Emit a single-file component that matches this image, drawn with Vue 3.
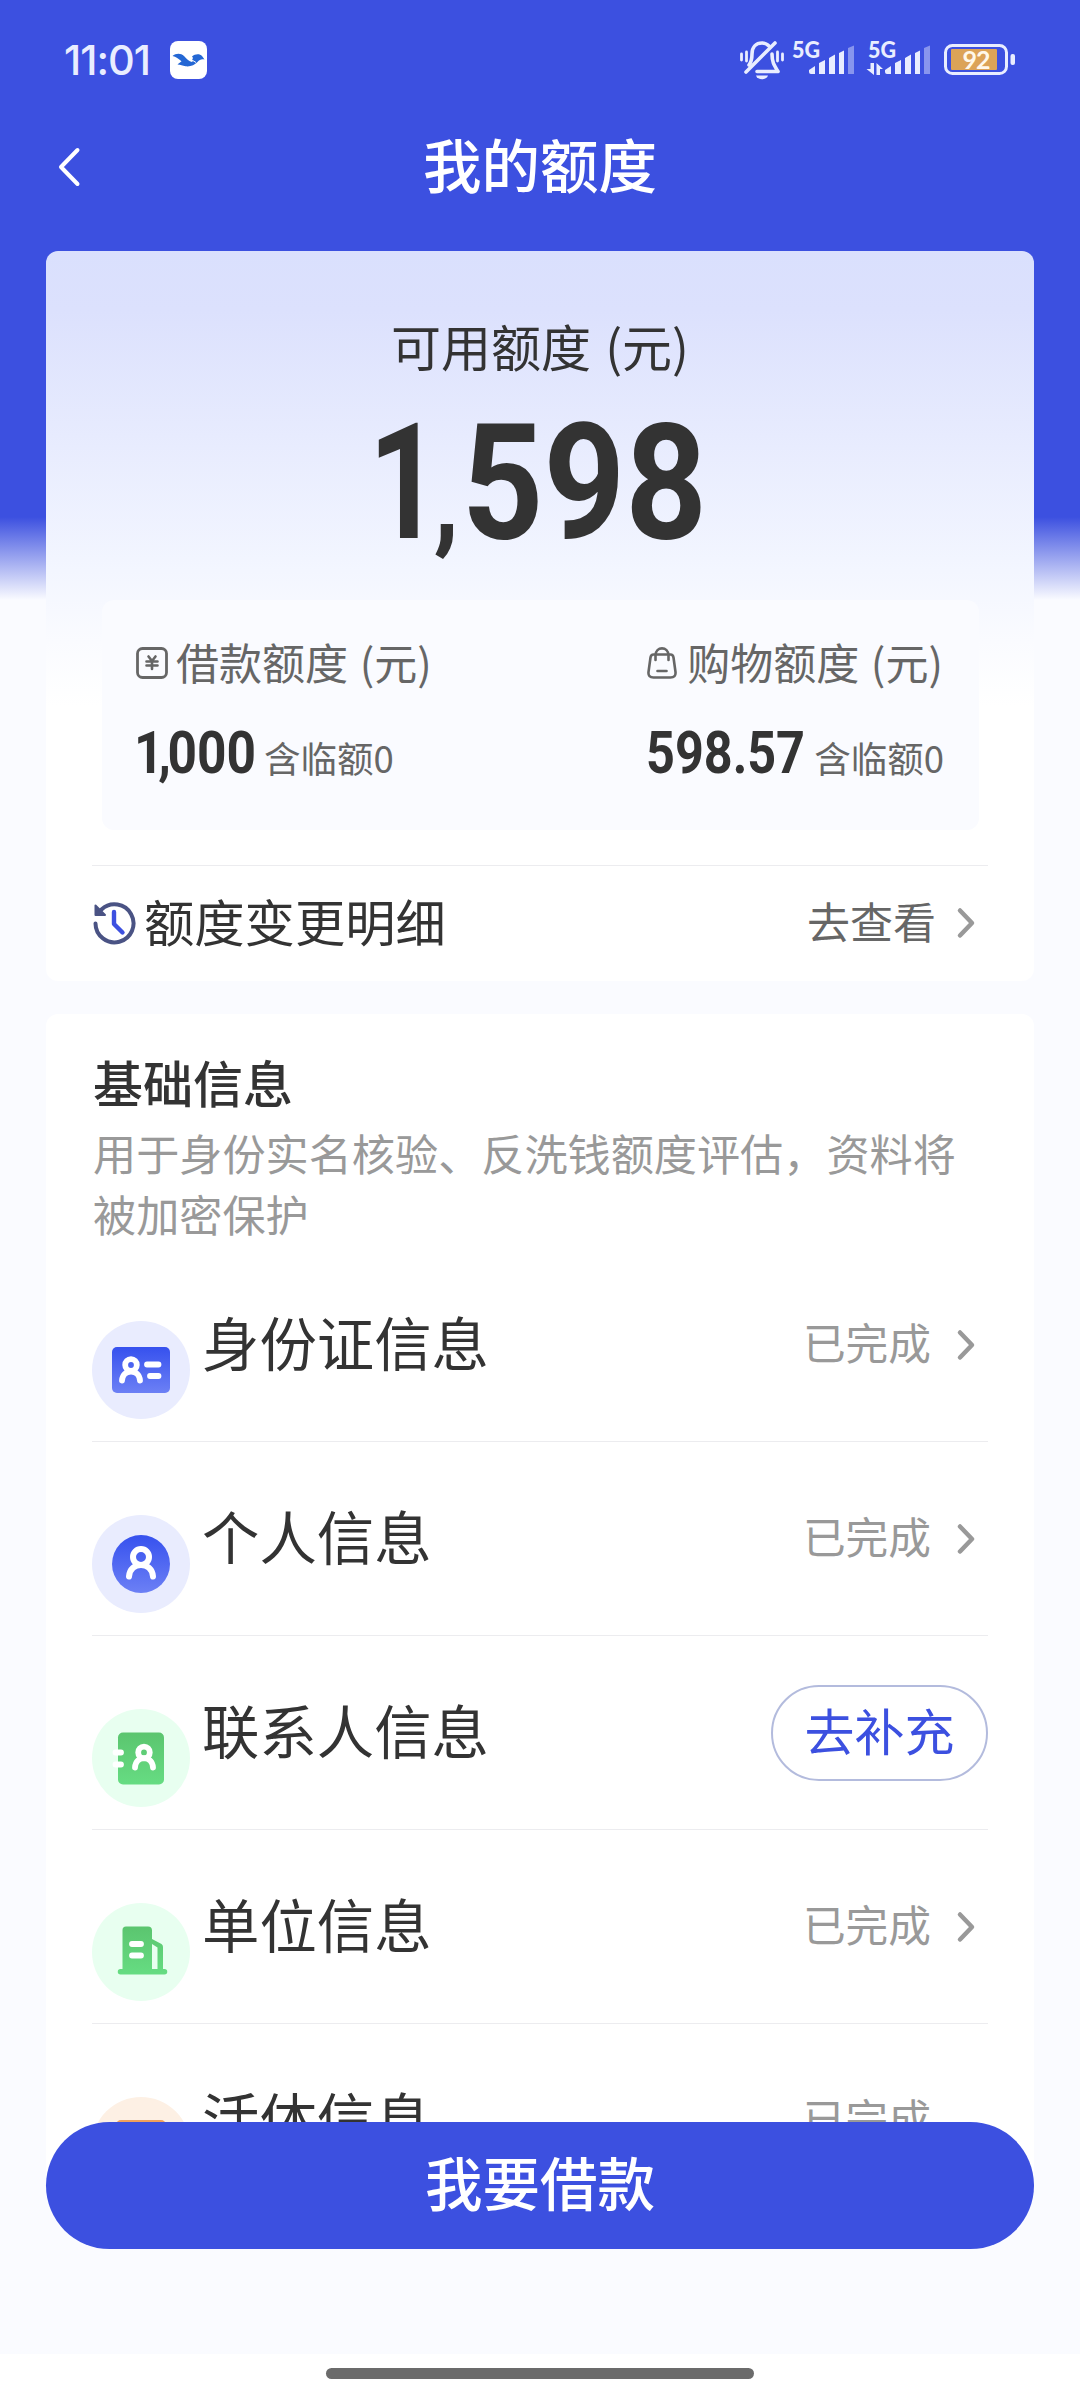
<script setup>
const quotas = [
  { icon: 'yuan', label: '借款额度 (元)', value: '1,000', width: 120, note: '含临额0' },
  { icon: 'bag', label: '购物额度 (元)', value: '598.57', width: 159, note: '含临额0' },
]

const rows = [
  { key: 'idcard', name: '身份证信息', tone: 'blue', done: true },
  { key: 'person', name: '个人信息', tone: 'blue', done: true },
  { key: 'contact', name: '联系人信息', tone: 'green', done: false },
  { key: 'company', name: '单位信息', tone: 'green', done: true },
  { key: 'live', name: '活体信息', tone: 'orange', done: true },
]
</script>

<template>
  <div class="page">
    <div class="status">
      <div class="status-left">
        <span class="clock">11:01</span>
        <svg class="app" width="37" height="38" viewBox="0 0 37 38">
          <rect width="37" height="38" rx="8" fill="#fff" />
          <path d="M2.500 15c3-2.500 8-3.500 11.500 0 3 3 5 5.500 8 6 1-.8 1-1.500 0-2.500 1-1 1.500-1.500 0-3 3-3 8-3 10-.5 1 1.500 2 2.500 2.500 3.500-3-.8-5 .2-7 2.500-3 3-7 5-12 4.300-3-.6-5-1.800-8-1.800 1.500-1.500 3-2 4-3.300C8.500 18 6 15.500 2.500 15z" fill="#2467d4" />
          <path d="M22 19l4 2.500" stroke="#fff" stroke-width="1" />
        </svg>
      </div>
      <div class="status-right">
        <svg width="280" height="72" viewBox="736 24 280 72">
          <g fill="none" stroke="#e9edff" stroke-width="3.600" stroke-linecap="round" stroke-linejoin="round">
            <path d="M746 72L775 43" />
            <path d="M749 65c3-4 3-7 3-11 0-7 4-11 10-11 3 0 5 1 7 3" />
            <path d="M772 54c0 8 2 11 6 17.500H757" />
            <path d="M741.500 54v6M746.500 52v9M777.500 52v9M782.500 54v6" stroke-width="2.800" />
          </g>
          <path d="M756 75.500h12c-1.500 5-10.500 5-12 0z" fill="#e9edff" />
          <g fill="#e9edff">
            <path d="M809 70l6-4v8h-4q-2 0-2-2zM819 63l6-3v14h-6zM829 58l6-3.500V74h-6zM839 53l5-2.500V74h-5z" />
            <path d="M885 70l6-4v8h-4q-2 0-2-2zM895 63l6-3v14h-6zM905 58l6-3.500V74h-6zM915 53l5-2.500V74h-5z" />
            <path d="M870.500 63h3.500v12l-7.500-6h4zM876.500 75V63l6.500 6h-3v6z" />
          </g>
          <g fill="#8895ee">
            <path d="M848 48l6-2.500V74h-6zM924 48l6-2.500V74h-6z" />
          </g>
          <g fill="#e9edff" font-family="Lato, sans-serif" font-weight="900" font-size="22">
            <text x="792" y="57.500" textLength="28" lengthAdjust="spacingAndGlyphs">5G</text>
            <text x="868" y="57.500" textLength="28" lengthAdjust="spacingAndGlyphs">5G</text>
          </g>
          <rect x="945.500" y="45.500" width="61" height="28" rx="7" fill="none" stroke="#e9edff" stroke-width="3" />
          <rect x="951" y="49" width="46" height="21" rx="1" fill="#dca357" />
          <rect x="1010.500" y="54" width="4.500" height="11" rx="2" fill="#e9edff" />
          <text x="962.500" y="68.500" textLength="28" font-family="Lato, sans-serif" font-weight="700" font-size="25" fill="#fff8ea">92</text>
        </svg>
      </div>
    </div>

    <div class="nav">
      <svg class="back" width="24" height="42" viewBox="0 0 24 42">
        <path d="M20.500 4L4 21l16.500 17" fill="none" stroke="#fff" stroke-width="4" stroke-linecap="round" stroke-linejoin="round" />
      </svg>
      <h1>我的额度</h1>
    </div>

    <section class="card quota">
      <div class="quota-label">可用额度 (元)</div>
      <div class="quota-total"><span class="one">1</span><span class="comma">,</span><span>598</span></div>

      <div class="split">
        <div v-for="q in quotas" :key="q.icon" class="split-item">
          <div class="split-label">
            <svg v-if="q.icon === 'yuan'" width="32" height="32" viewBox="0 0 32 32" fill="none" stroke="#666" stroke-linecap="round">
              <rect x="1.500" y="1.500" width="29" height="29" rx="5" stroke-width="2.800" />
              <path d="M12.500 9.500l3.500 4.500 3.500-4.500M10.500 14.500h11M10.500 18.500h11M16 14.500v7.500" stroke-width="2.600" />
            </svg>
            <svg v-else width="32" height="32" viewBox="0 0 32 32" fill="none" stroke="#666" stroke-linecap="round" stroke-linejoin="round">
              <path d="M6.500 7.500h17q2.500 0 3 3l2 14.500q.5 5.500-5 5.500h-17q-5.500 0-5-5.500l2-14.500q.5-3 3-3z" stroke-width="2.600" />
              <path d="M8.500 13V8.500c0-9.500 13-9.500 13 0V13" stroke-width="2.600" />
              <path d="M10.500 24h9" stroke-width="2.600" />
            </svg>
            <span>{{ q.label }}</span>
          </div>
          <div class="split-value">
            <svg class="num" :width="q.width" height="80" :viewBox="`0 0 ${q.width} 80`">
              <text v-if="q.value.startsWith('1,')" x="-2" y="60" :textLength="q.width + 2" lengthAdjust="spacingAndGlyphs" dx="0 -6 -4">{{ q.value }}</text>
              <text v-else x="-1" y="60" :textLength="q.width" lengthAdjust="spacingAndGlyphs">{{ q.value }}</text>
            </svg>
            <span class="note">{{ q.note }}</span>
          </div>
        </div>
      </div>

      <div class="history">
        <svg class="clock-icon" width="44" height="44" viewBox="0 0 44 44" fill="none">
          <path d="M3.500 22.500A19 19 0 1 0 9.500 8.500" stroke="#4a5384" stroke-width="4" stroke-linecap="round" />
          <path d="M3.500 4.500v9.500h9.500z" fill="#4a5384" stroke="#4a5384" stroke-width="2" stroke-linejoin="round" />
          <path d="M22 11v12l8.500 8.500" stroke="#3d50e0" stroke-width="4.400" stroke-linecap="round" stroke-linejoin="round" />
        </svg>
        <span class="history-name">额度变更明细</span>
        <span class="history-go">去查看</span>
        <svg class="chev" width="20" height="32" viewBox="0 0 20 32"><path d="M4 3.500L16 16 4 28.500" /></svg>
      </div>
    </section>

    <section class="card info">
      <h2>基础信息</h2>
      <p>用于身份实名核验、反洗钱额度评估，资料将被加密保护</p>

      <div v-for="r in rows" :key="r.key" class="row" :class="r.key">
        <svg class="badge" width="98" height="98" viewBox="0 0 98 98">
          <defs>
            <linearGradient id="gBlue" x1="0" y1="0" x2="0" y2="1">
              <stop offset="0" stop-color="#3651ee" /><stop offset="1" stop-color="#6c80f5" />
            </linearGradient>
            <linearGradient id="gGreen" x1="0" y1="0" x2="0" y2="1">
              <stop offset="0" stop-color="#5bc56f" /><stop offset="1" stop-color="#66dc82" />
            </linearGradient>
          </defs>
          <circle cx="49" cy="49" r="49" :class="r.tone" />
          <template v-if="r.key === 'idcard'">
            <rect x="20" y="26" width="58" height="46" rx="5" fill="url(#gBlue)" />
            <g fill="none" stroke="#fff" stroke-width="5.800" stroke-linecap="round">
              <circle cx="39" cy="44" r="5.800" />
              <path d="M30 59.500c1-12 17-12 18 0" />
              <path d="M55 43.500h11.500M58 55h8.500" />
            </g>
          </template>
          <template v-else-if="r.key === 'person'">
            <circle cx="49" cy="49" r="29" fill="url(#gBlue)" />
            <g fill="none" stroke="#fff" stroke-width="6" stroke-linecap="round">
              <circle cx="49" cy="42" r="8" />
              <path d="M37 61.500c1-15.500 23-15.500 24 0" />
            </g>
          </template>
          <template v-else-if="r.key === 'contact'">
            <rect x="26" y="23.500" width="46" height="52" rx="5" fill="url(#gGreen)" />
            <g fill="none" stroke="#fff" stroke-width="5.800" stroke-linecap="round">
              <circle cx="52" cy="43.500" r="5.800" />
              <path d="M43 58.500c1-12.500 17-12.500 18 0" />
              <path d="M23.500 43.500H29M23.500 55.500H29" />
            </g>
          </template>
          <template v-else-if="r.key === 'company'">
            <path d="M34 23.500h22q4 0 4 4V36l9.500 5q1.500 1 1.500 3v22h1.500a2.500 2.500 0 0 1 0 5.500h-44a2.500 2.500 0 0 1 0-5.500H30.500V27q0-3.500 3.500-3.500z" fill="url(#gGreen)" />
            <path d="M60 41l5.500 3.500V66H60z" fill="#e8fff0" />
            <path d="M40 41h9M40 52.500h9" stroke="#fff" stroke-width="5.800" stroke-linecap="round" />
          </template>
          <template v-else>
            <rect x="24" y="23" width="50" height="52" rx="5" fill="#f0a05c" />
          </template>
        </svg>
        <span class="row-name">{{ r.name }}</span>
        <template v-if="r.done">
          <span class="row-state">已完成</span>
          <svg class="chev" width="20" height="32" viewBox="0 0 20 32"><path d="M4 3.500L16 16 4 28.500" /></svg>
        </template>
        <button v-else class="fill-btn">去补充</button>
      </div>
    </section>

    <div class="footer">
      <button class="borrow">我要借款</button>
      <div class="gesture"><div class="pill"></div></div>
    </div>
  </div>
</template>

<style>
html, body { margin: 0; }
</style>

<style scoped>
* { box-sizing: border-box; }
.page {
  position: relative;
  width: 1080px;
  height: 2400px;
  overflow: hidden;
  font-family: "Noto Sans CJK SC", sans-serif;
  color: #333;
  background: linear-gradient(180deg, #3c50e0 0, #3c50e0 517px, #fafbff 600px, #fafbff 100%);
}
.status {
  display: flex;
  justify-content: space-between;
  align-items: center;
  height: 120px;
  padding: 0 64px 0 64px;
}
.status-left { display: flex; align-items: center; }
.clock {
  width: 106px;
  font: 500 41.500px/44px Inter, sans-serif;
  letter-spacing: -1px;
  color: #e9edff;
}
.status-right { display: flex; }
.nav {
  display: grid;
  grid-template-columns: 80px 1fr 80px;
  align-items: center;
  height: 131px;
  padding-bottom: 39px;
}
.back { margin-left: 57px; margin-top: 2px; }
h1 {
  margin: 0;
  padding-bottom: 7px;
  text-align: center;
  color: #fff;
  font-weight: 500;
  font-size: 58.500px;
  line-height: 80px;
}
.card { width: 988px; margin: 0 auto; border-radius: 12px; background: #fff; }
.quota {
  height: 730px;
  padding: 0 46px;
  background: linear-gradient(180deg, #dae0fd 0, #dce1fd 60px, #f3f6ff 320px, #fafbff 390px, #fff 455px);
}
.quota-label { padding-top: 59px; text-align: center; font-size: 50px; line-height: 70px; word-spacing: 3px; }
.quota-total {
  display: flex;
  justify-content: center;
  align-items: baseline;
  height: 220px;
  padding-right: 12px;
  font: 700 162px/206px Roboto, sans-serif;
  transform: scaleX(.88);
}
.quota-total .one { transform: scaleX(.88); transform-origin: right; margin-right: -8px; margin-left: -4px; }
.quota-total .comma { font-size: 118px; margin-right: 3px; }
.split {
  display: flex;
  justify-content: space-between;
  width: 877px;
  height: 230px;
  margin-left: 10px;
  padding: 28px 35px 0 34px;
  border-radius: 12px;
  background: #fafbff;
}
.split-label {
  display: flex;
  align-items: center;
  height: 66px;
  color: #666;
  font-size: 43px;
  word-spacing: 2px;
  white-space: nowrap;
}
.split-label svg { margin-right: 8px; margin-top: 4px; }
.split-value { display: flex; align-items: flex-start; margin-top: 19px; height: 80px; white-space: nowrap; }
.num { flex: none; overflow: visible; font: 700 59px Roboto, sans-serif; fill: #333; }
.note { margin-left: 8px; font-size: 36.500px; line-height: 80px; padding-top: 5px; color: #666; }
.history {
  display: flex;
  align-items: center;
  margin-top: 35px;
  padding-right: 12px;
  height: 115px;
  border-top: 1.500px solid #ececef;
}
.history-name { margin-left: 8px; padding-bottom: 7px; font-size: 50.300px; line-height: 70px; }
.history-go { margin-left: auto; margin-right: 20px; padding-bottom: 6px; color: #666; font-size: 43px; }
.chev { fill: none; stroke: #999; stroke-width: 4.500; stroke-linecap: round; stroke-linejoin: round; }
.info { margin-top: 33px; height: 1180px; overflow: hidden; padding: 32px 46px 0; }
h2 { margin: 0; padding-left: 1px; font-weight: 500; font-size: 50px; line-height: 70px; }
p { margin: 6px 0 0; padding: 0 1px; color: #999; font-size: 43.150px; line-height: 61px; height: 126px; }
.row { display: flex; align-items: center; height: 194px; padding-right: 12px; border-bottom: 1.500px solid #ececef; }
.badge { position: relative; top: 25px; flex: none; }
.badge circle.blue { fill: #e9ecfe; }
.badge circle.green { fill: #e8fff0; }
.badge circle.orange { fill: #fdf0e4; }
.row-name { margin-left: 12px; padding-bottom: 8px; font-size: 57.400px; line-height: 80px; }
.row-state { margin-left: auto; margin-right: 25px; padding-bottom: 8px; color: #999; font-size: 42.700px; }
.live .chev { visibility: hidden; }
.fill-btn {
  width: 217px;
  height: 96px;
  margin: 0 -12px 0 auto;
  padding: 0 0 8px;
  border: 2px solid #b3bbdd;
  border-radius: 48px;
  background: #fff;
  color: #3c50e0;
  font: 400 50px/80px "Noto Sans CJK SC", sans-serif;
}
.footer {
  position: absolute;
  left: 0;
  right: 0;
  bottom: 0;
  display: flex;
  flex-direction: column;
  align-items: center;
  justify-content: space-between;
  height: 278px;
}
.borrow {
  width: 988px;
  height: 127px;
  padding: 0 0 9px;
  border: 0;
  border-radius: 64px;
  background: #3c50e0;
  color: #fff;
  font: 500 57.500px/100px "Noto Sans CJK SC", sans-serif;
}
.gesture { width: 100%; height: 46px; padding-top: 14px; background: #fff; }
.pill { width: 428px; height: 11px; margin: 0 auto; border-radius: 6px; background: #6b6b6b; }
</style>
